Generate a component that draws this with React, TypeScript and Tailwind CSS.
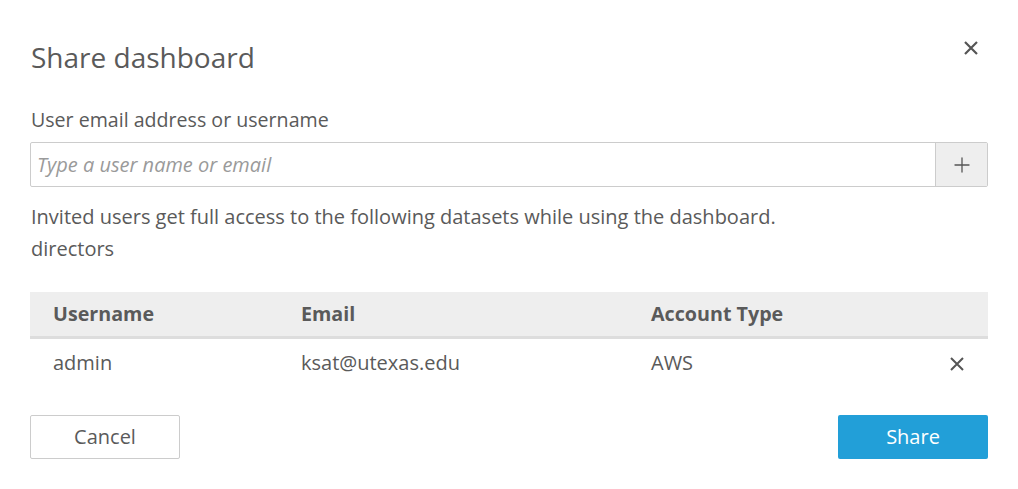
import { Plus } from 'lucide-react';

const rows = [{ username: 'admin', email: 'ksat@utexas.edu', type: 'AWS' }];

const Cross = ({ size, stroke }: { size: number; stroke: number }) => (
  <svg width={size} height={size} viewBox="0 0 14 14" fill="none" stroke="currentColor" strokeWidth={stroke}>
    <path d="M1 1L13 13M13 1L1 13" />
  </svg>
);

export default function App() {
  return (
    <div
      className="w-[1018px] h-[489px] bg-white text-[#5a5a5a] px-[30px] overflow-hidden"
      style={{ fontFamily: '"Open Sans", "Noto Sans", sans-serif' }}
    >
      {/* Header */}
      <div className="flex items-center justify-between pt-[30px] h-[84px]">
        <h1 className="text-[28px] leading-[40px] pl-px">Share dashboard</h1>
        <button className="text-[#555] mr-[10px] -mt-[18px]">
          <Cross size={14} stroke={2.2} />
        </button>
      </div>

      {/* Email input */}
      <label className="block text-[19.6px] leading-[28px] mt-[22px] pl-px">User email address or username</label>
      <div className="flex h-[45px] mt-[8px] border border-[#cccccc] rounded-[2px]">
        <input
          type="text"
          placeholder="Type a user name or email"
          className="flex-1 px-[6px] text-[20px] italic outline-none placeholder:text-[#9a9a9a]"
        />
        <button className="w-[52px] bg-[#eeeeee] border-l border-[#cccccc] flex items-center justify-center text-[#555]">
          <Plus size={24} strokeWidth={1.3} />
        </button>
      </div>

      {/* Note */}
      <p className="text-[20px] leading-[32px] mt-[14px] pl-px">
        Invited users get full access to the following datasets while using the dashboard.
        <br />
        directors
      </p>

      {/* Table */}
      <div className="mt-[27px]">
        <div className="flex items-center h-[47px] bg-[#eeeeee] border-b-[3px] border-[#dddddd] font-bold text-[19.7px]">
          <div className="w-[248px] pl-[23px]">Username</div>
          <div className="w-[350px] pl-[23px]">Email</div>
          <div className="flex-1 pl-[23px]">Account Type</div>
        </div>
        {rows.map((r) => (
          <div key={r.username} className="flex items-center h-[48px] text-[20px]">
            <div className="w-[248px] pl-[23px]">{r.username}</div>
            <div className="w-[350px] pl-[23px]">{r.email}</div>
            <div className="flex-1 pl-[23px]">{r.type}</div>
            <button className="mr-[24px] mt-[2px] text-[#555]">
              <Cross size={14} stroke={2} />
            </button>
          </div>
        ))}
      </div>

      {/* Footer */}
      <div className="flex justify-between mt-[28px]">
        <button className="w-[150px] h-[44px] border border-[#cccccc] rounded-[2px] text-[20px] text-[#5a5a5a]">
          Cancel
        </button>
        <button className="w-[150px] h-[44px] rounded-[2px] bg-[#229fd8] text-white text-[20px]">Share</button>
      </div>
    </div>
  );
}
